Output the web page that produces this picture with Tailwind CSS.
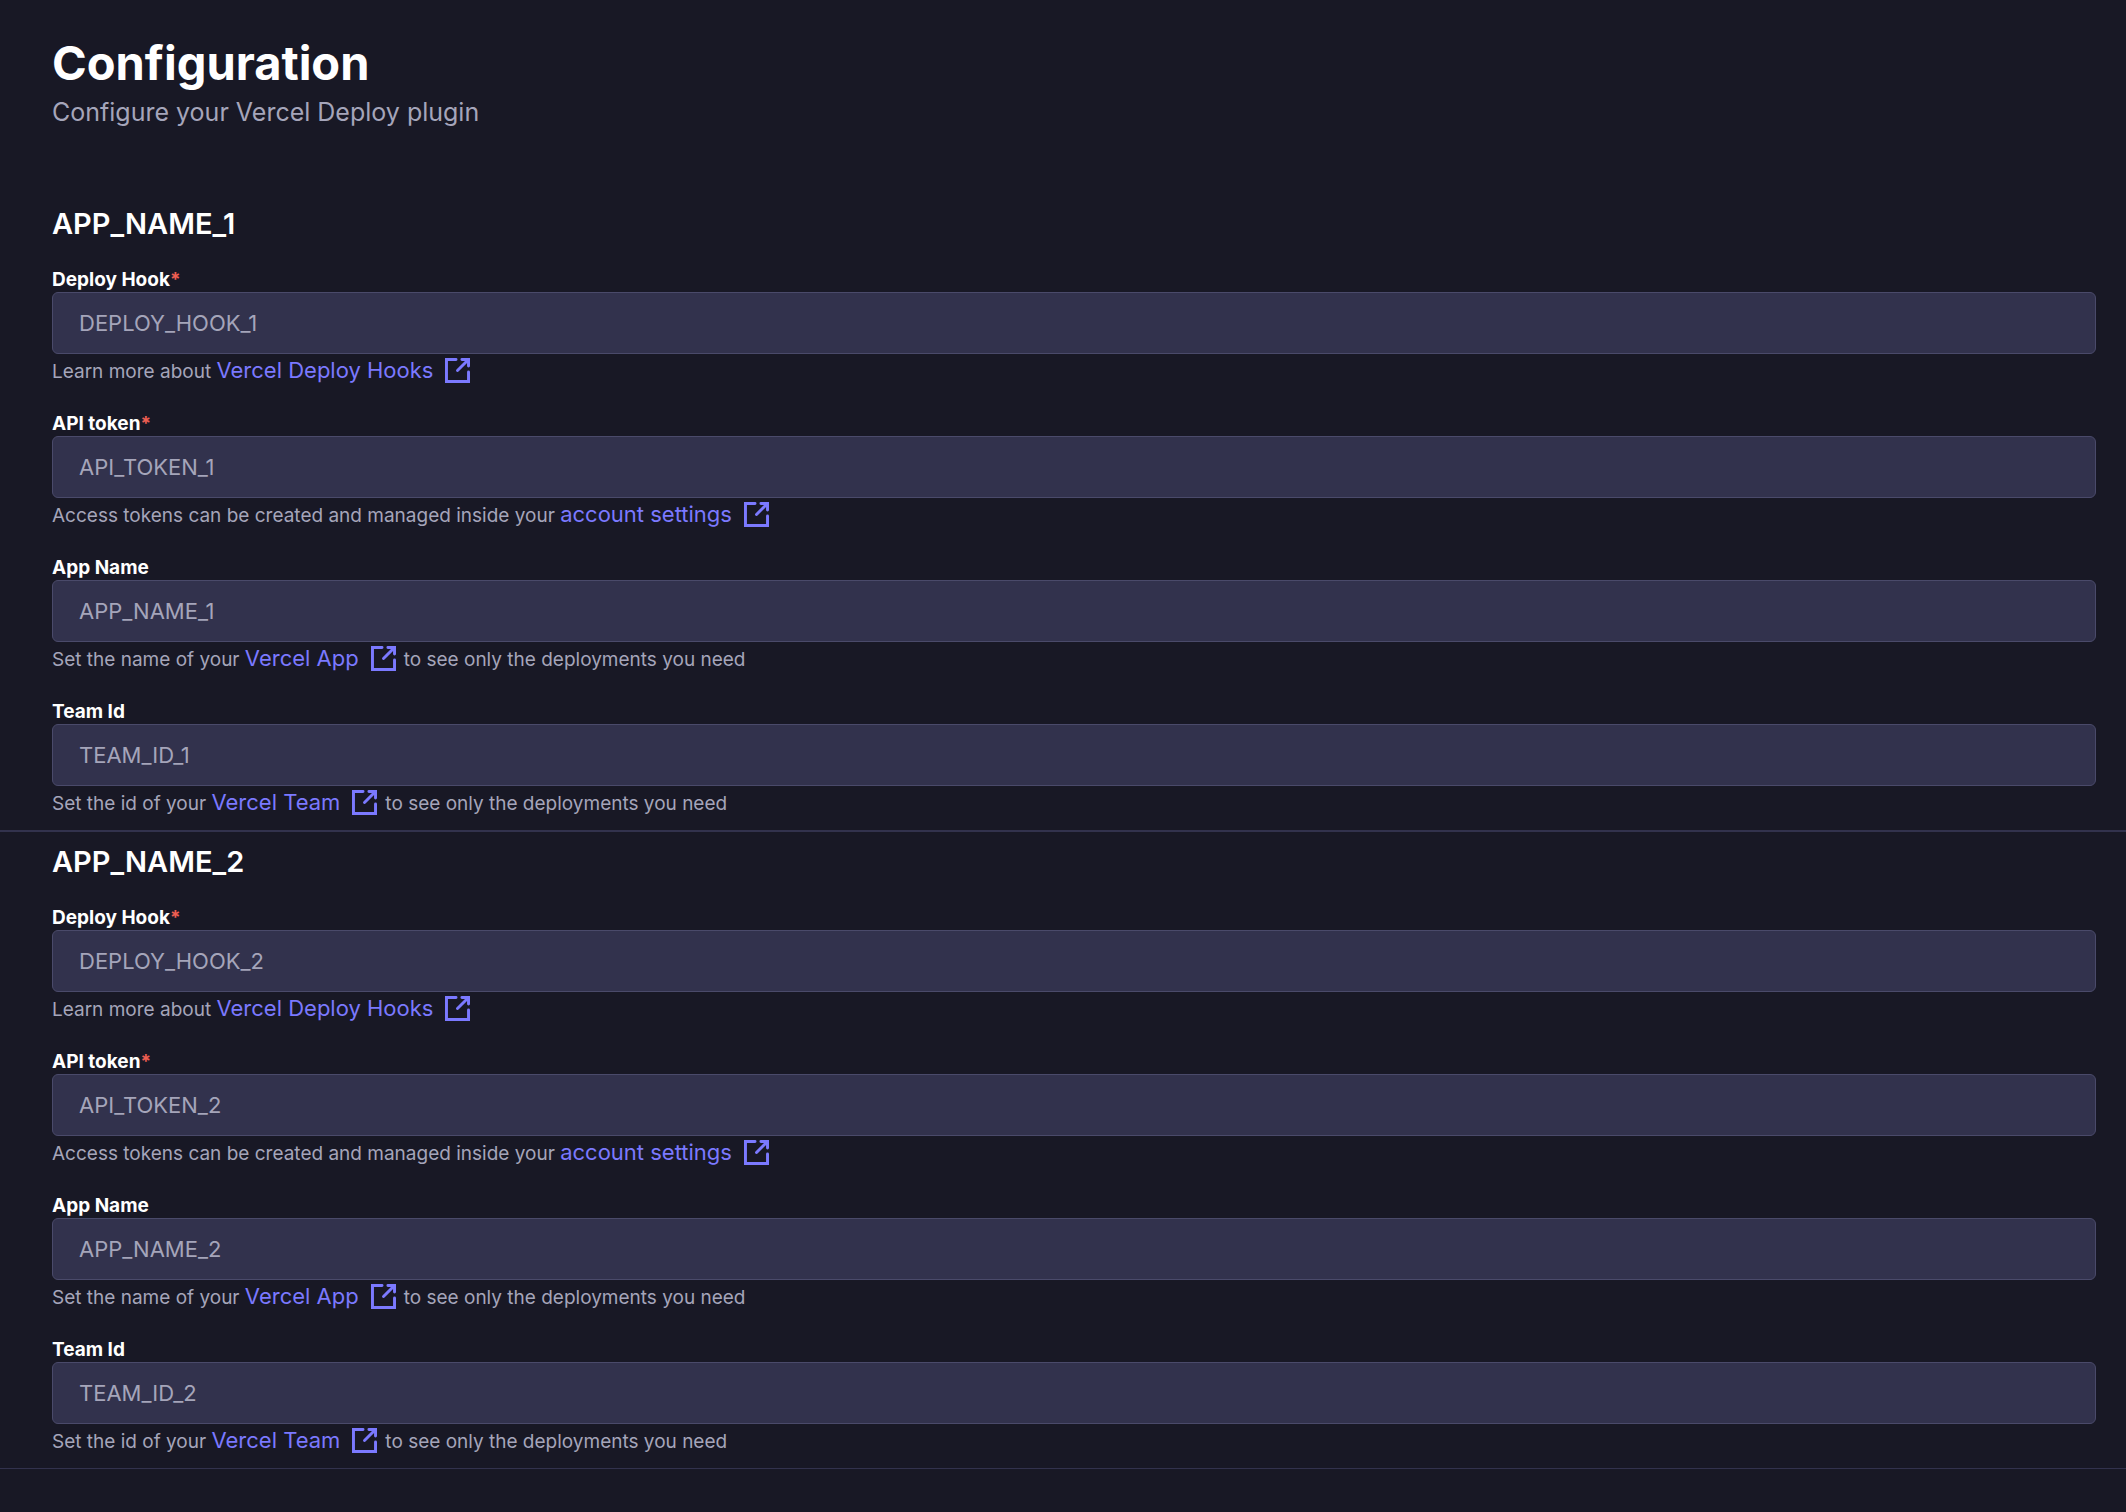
<!DOCTYPE html>
<html lang="en">
<head>
<meta charset="utf-8">
<title>Configuration</title>
<script src="https://cdn.jsdelivr.net/npm/@tailwindcss/browser@4"></script>
</head>
<body class="min-h-screen bg-[#181825] font-['Inter',sans-serif] text-white">
<svg class="hidden" aria-hidden="true">
  <symbol id="external" viewBox="0 0 24 24"><path fill="currentColor" d="M16.235 2.824a1.412 1.412 0 0 1 0-2.824H24v7.765a1.412 1.412 0 0 1-2.823 0V4.82l-8.179 8.178a1.412 1.412 0 0 1-1.996-1.996l8.178-8.178h-2.945Zm4.942 10.588a1.412 1.412 0 0 1 2.823 0V24H0V0h10.588a1.412 1.412 0 0 1 0 2.824H2.824v18.353h18.353v-7.765Z"/></symbol>
</svg>
<main>
  <header class="pt-8 pr-[30px] pl-[52px]">
    <h1 class="text-[47px] leading-[62px] font-bold">Configuration</h1>
    <p class="text-[25px] leading-9 text-[#a5a5ba]">Configure your Vercel Deploy plugin</p>
  </header>
  <div id="apps" class="pt-16"></div>
</main>
<script>
  const fields = [
    { label: 'Deploy Hook', key: 'DEPLOY_HOOK', required: true, before: 'Learn more about', link: 'Vercel Deploy Hooks', after: '' },
    { label: 'API token', key: 'API_TOKEN', required: true, before: 'Access tokens can be created and managed inside your', link: 'account settings', after: '' },
    { label: 'App Name', key: 'APP_NAME', required: false, before: 'Set the name of your', link: 'Vercel App', after: 'to see only the deployments you need' },
    { label: 'Team Id', key: 'TEAM_ID', required: false, before: 'Set the id of your', link: 'Vercel Team', after: 'to see only the deployments you need' },
  ];
  const field = (f, n) => `
    <div>
      <label for="${f.key}_${n}" class="block text-[19px] leading-6 font-bold">${f.label}${f.required ? '<span class="text-[#ee5e52]">*</span>' : ''}</label>
      <input id="${f.key}_${n}" type="text" placeholder="${f.key}_${n}" class="block h-[62px] w-full rounded-md border border-[#4a4a6a] bg-[#32324d] px-[26px] text-[22px] text-white placeholder:text-[#a5a5ba]">
      <p class="flex h-8 items-baseline text-[19px] leading-8 whitespace-pre text-[#a5a5ba]"><span>${f.before} </span><a href="#" class="flex items-center gap-3 text-[22px] text-[#7b79ff]">${f.link}<svg class="size-[25px]" aria-hidden="true"><use href="#external"/></svg></a>${f.after ? `<span class="pl-2">${f.after}</span>` : ''}</p>
    </div>`;
  document.getElementById('apps').innerHTML = [1, 2].map(n => `
    <section class="border-b-2 border-[#32324d] pt-[10px] pr-[30px] pb-3 pl-[52px] last:border-b">
      <h2 class="text-[29px] leading-10 font-semibold">APP_NAME_${n}</h2>
      <div class="flex flex-col gap-[26px] pt-6">${fields.map(f => field(f, n)).join('')}</div>
    </section>`).join('');
</script>
</body>
</html>
